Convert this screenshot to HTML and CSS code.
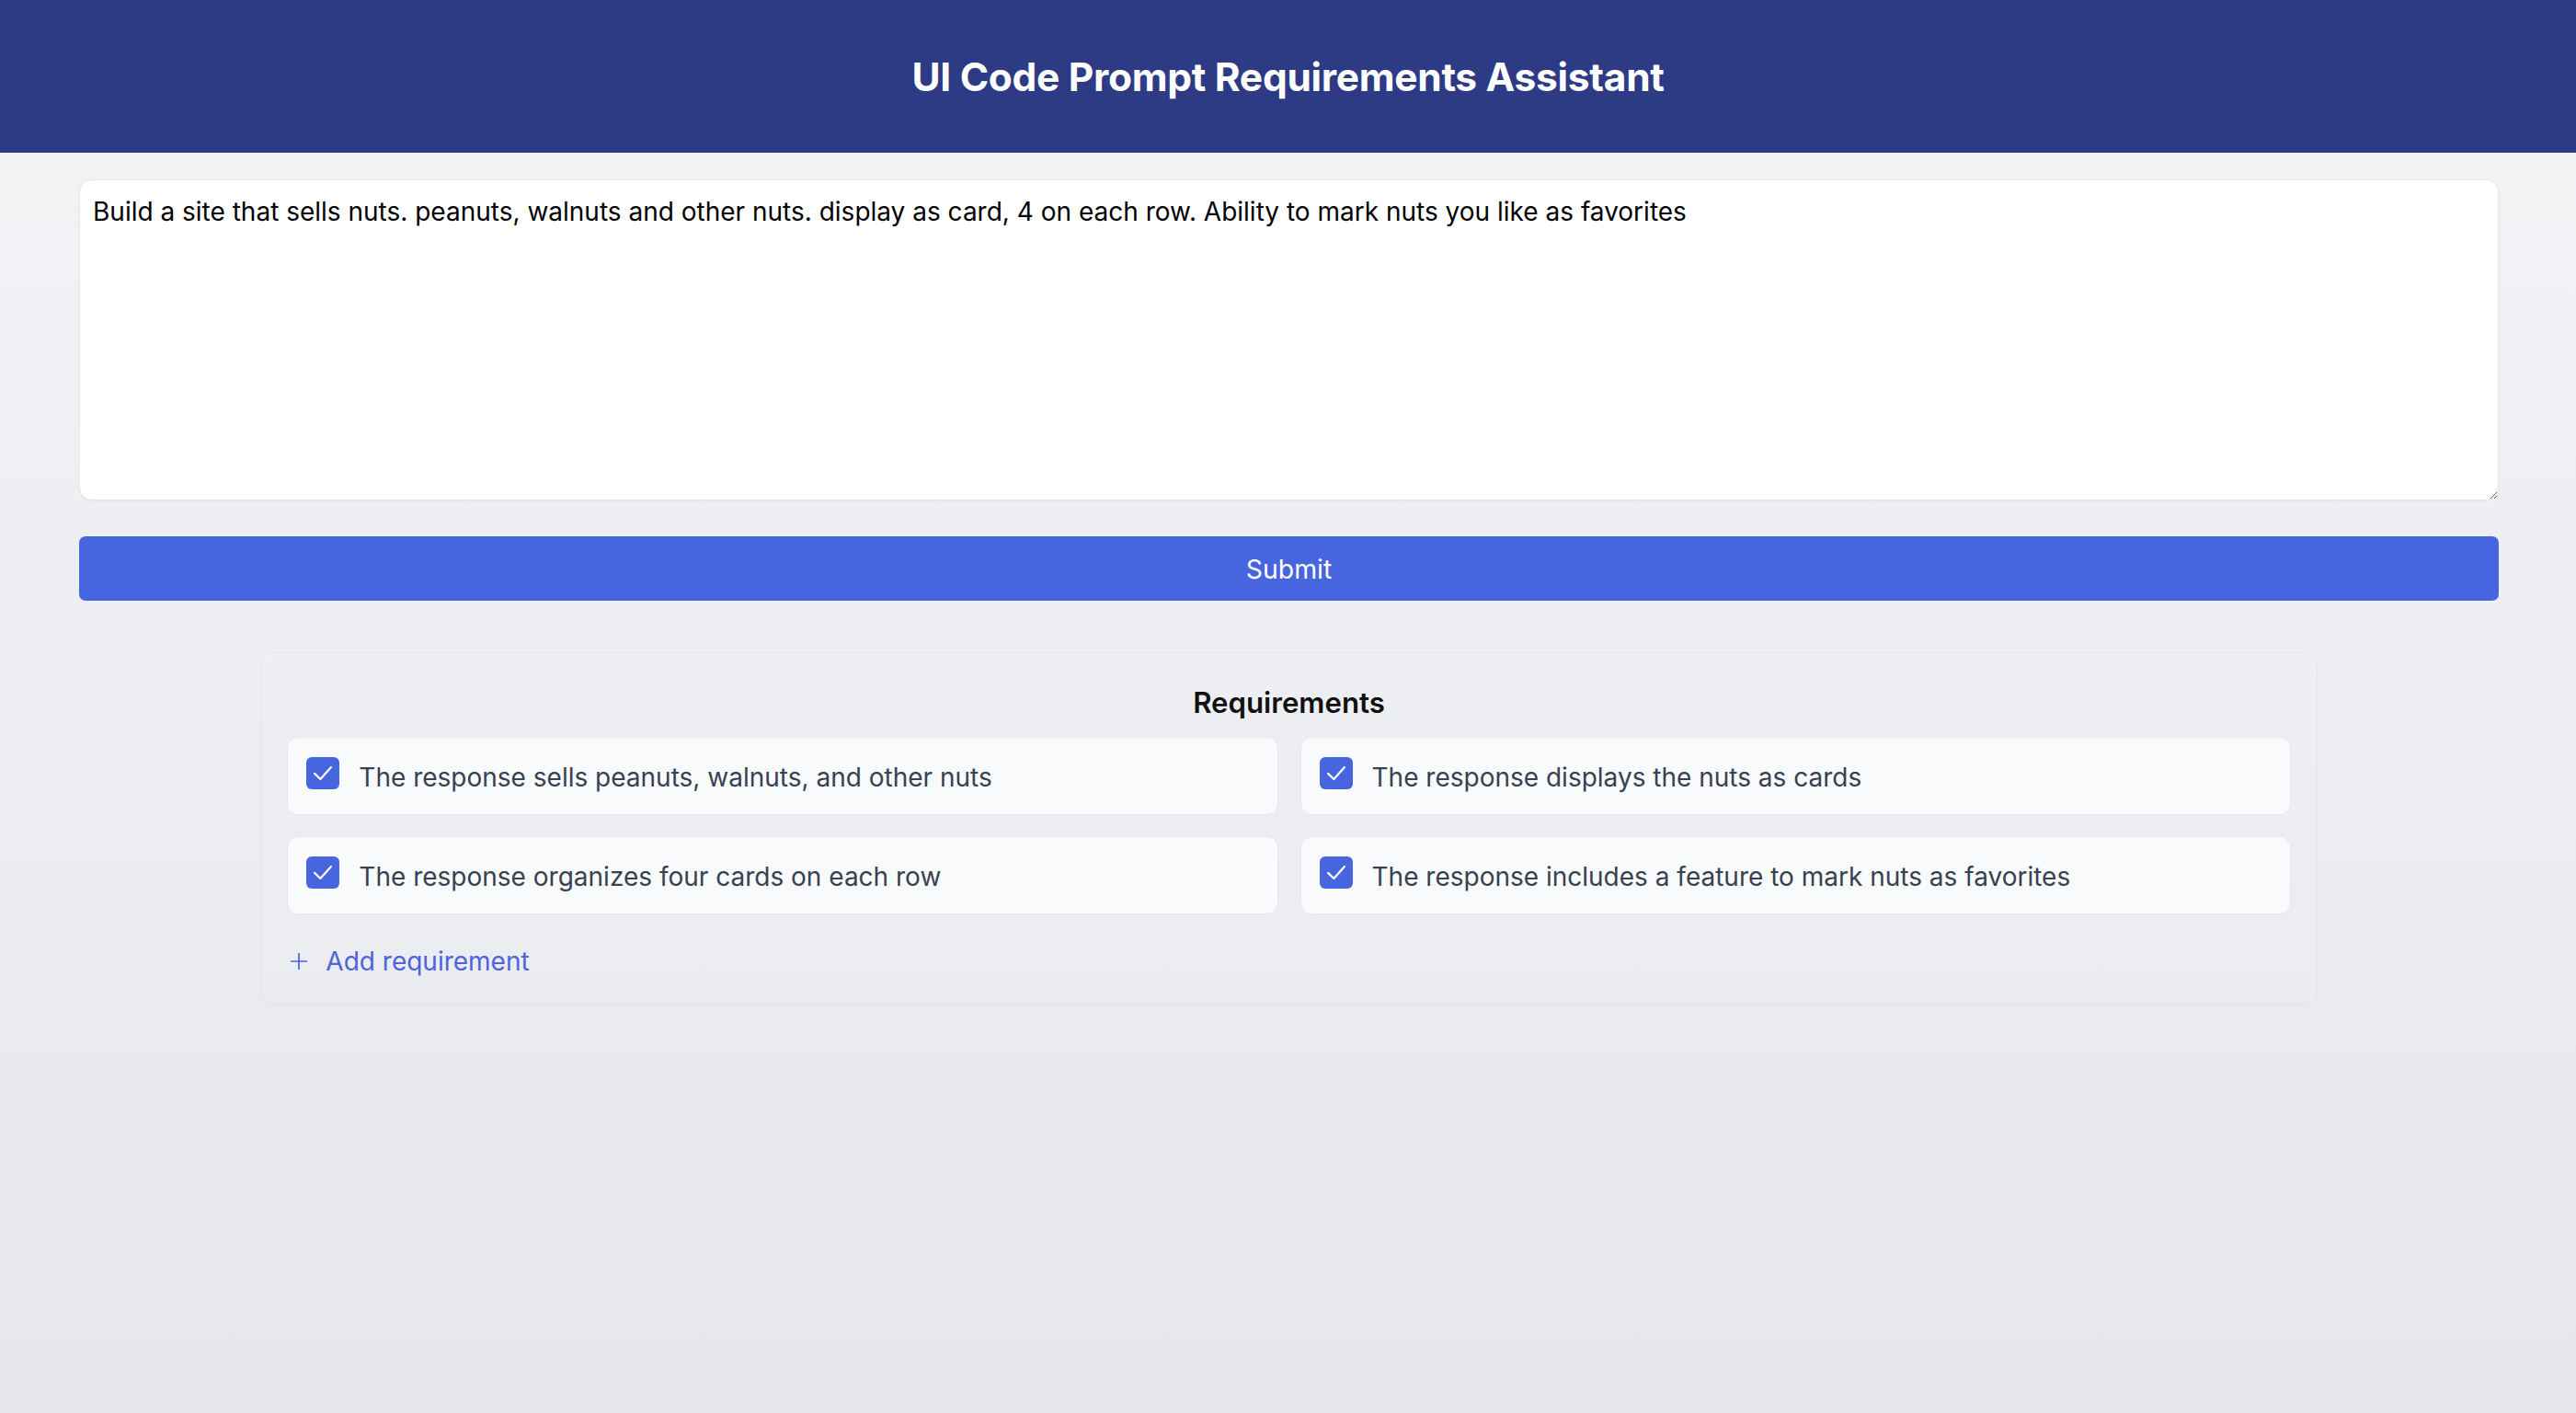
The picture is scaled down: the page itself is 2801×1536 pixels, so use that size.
FILE: index.html
```html
<!DOCTYPE html>
<html lang="en">
<head>
<meta charset="utf-8">
<title>UI Code Prompt Requirements Assistant</title>
<link rel="stylesheet" href="styles.css">
</head>
<body>
<header class="app-header">
  <h1 class="app-title">UI Code Prompt Requirements Assistant</h1>
</header>
<main class="app-main">
  <textarea class="prompt-input" spellcheck="false">Build a site that sells nuts. peanuts, walnuts and other nuts. display as card, 4 on each row. Ability to mark nuts you like as favorites</textarea>
  <button class="submit-btn" type="button">Submit</button>
  <section class="req-panel">
    <h2 class="req-title">Requirements</h2>
    <div class="req-grid">
      <div class="req-card">
        <span class="req-check"><svg viewBox="0 0 20 20"><path d="M4.9 10.2l3.6 3.5 6.6-7.4" fill="none" stroke="#fff" stroke-width="1.25" stroke-linecap="round" stroke-linejoin="round"/></svg></span>
        <span class="req-text">The response sells peanuts, walnuts, and other nuts</span>
      </div>
      <div class="req-card">
        <span class="req-check"><svg viewBox="0 0 20 20"><path d="M4.9 10.2l3.6 3.5 6.6-7.4" fill="none" stroke="#fff" stroke-width="1.25" stroke-linecap="round" stroke-linejoin="round"/></svg></span>
        <span class="req-text">The response displays the nuts as cards</span>
      </div>
      <div class="req-card">
        <span class="req-check"><svg viewBox="0 0 20 20"><path d="M4.9 10.2l3.6 3.5 6.6-7.4" fill="none" stroke="#fff" stroke-width="1.25" stroke-linecap="round" stroke-linejoin="round"/></svg></span>
        <span class="req-text">The response organizes four cards on each row</span>
      </div>
      <div class="req-card">
        <span class="req-check"><svg viewBox="0 0 20 20"><path d="M4.9 10.2l3.6 3.5 6.6-7.4" fill="none" stroke="#fff" stroke-width="1.25" stroke-linecap="round" stroke-linejoin="round"/></svg></span>
        <span class="req-text">The response includes a feature to mark nuts as favorites</span>
      </div>
    </div>
    <button class="add-btn" type="button">
      <svg class="add-icon" viewBox="0 0 20 20"><path d="M10 1v18M1 10h18" stroke="currentColor" stroke-width="1.7" fill="none"/></svg>
      <span>Add requirement</span>
    </button>
  </section>
</main>
</body>
</html>
```
FILE: styles.css
```css
* { box-sizing: border-box; }
html, body { margin: 0; padding: 0; }
body {
  min-height: 100vh;
  font-family: Inter, "Noto Sans", sans-serif;
  background: linear-gradient(to bottom, #f3f4f6, #e6e7eb);
  color: #111827;
}
.app-header {
  height: 166px;
  background: #2d3a84;
  display: flex;
  align-items: center;
  justify-content: center;
}
.app-title {
  margin: 0;
  color: #ffffff;
  font-size: 42.5px;
  font-weight: 700;
  letter-spacing: -0.3px;
}
.app-main {
  padding: 29px 84px 40px 86px;
  display: flex;
  flex-direction: column;
}
.prompt-input {
  display: block;
  width: 100%;
  height: 349px;
  padding: 17px 14px 14px;
  border: 1px solid #e5e7eb;
  border-radius: 14px;
  background: #ffffff;
  box-shadow: 0 1px 3px rgba(0,0,0,0.04);
  font-family: Inter, "Noto Sans", sans-serif;
  font-size: 28px;
  color: #000000;
  resize: vertical;
  outline: none;
}
.submit-btn {
  margin-top: 39px;
  height: 70px;
  width: 100%;
  border: none;
  border-radius: 7px;
  background: #4865e0;
  color: #ffffff;
  font-family: Inter, "Noto Sans", sans-serif;
  font-size: 28.4px;
  font-weight: 400;
  cursor: pointer;
}
.req-panel {
  width: 85%;
  align-self: center;
  margin-top: 56px;
  padding: 35px 28px 29px;
  border: 1px solid rgba(0,0,0,0.035);
  border-radius: 14px;
  background: rgba(255,255,255,0.08);
}
.req-title {
  margin: 0 0 18px;
  text-align: center;
  font-size: 31.2px;
  font-weight: 600;
  color: #111111;
}
.req-grid {
  display: grid;
  grid-template-columns: 1fr 1fr;
  column-gap: 24px;
  row-gap: 23px;
}
.req-card {
  display: flex;
  align-items: flex-start;
  gap: 21px;
  height: 85px;
  padding: 20px 20px;
  background: #f9fafb;
  border: 1px solid #e6e8ec;
  border-radius: 12px;
}
.req-check {
  flex: none;
  width: 36px;
  height: 35px;
  margin-top: 1px;
  border-radius: 6px;
  background: #4865e0;
  display: flex;
  align-items: center;
  justify-content: center;
}
.req-check svg { width: 36px; height: 35px; }
.req-text {
  padding-top: 3px;
  font-size: 28px;
  line-height: 41px;
  color: #374151;
}
.add-btn {
  margin-top: 34px;
  padding: 0 0 0 3px;
  border: none;
  background: transparent;
  display: flex;
  align-items: center;
  gap: 19px;
  color: #4d63dc;
  font-family: Inter, "Noto Sans", sans-serif;
  font-size: 28px;
  cursor: pointer;
}
.add-icon { width: 20px; height: 20px; }
```
